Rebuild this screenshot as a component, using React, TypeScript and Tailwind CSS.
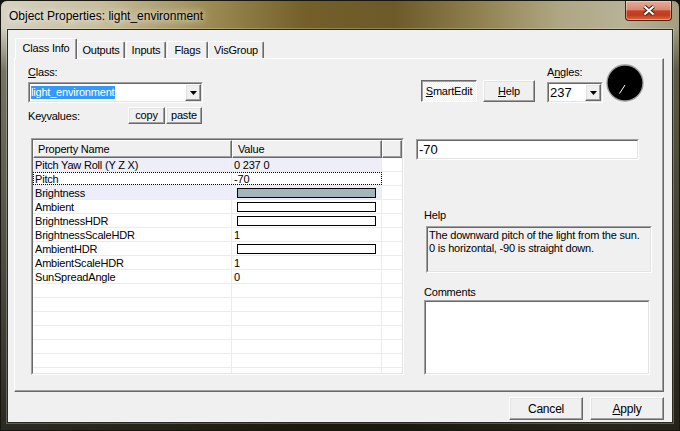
import React from "react";

const raised =
  "bg-[#f0f0f0] border border-t-white border-l-white border-r-[#696969] border-b-[#696969] shadow-[inset_-1px_-1px_0_#a0a0a0,inset_1px_1px_0_#e3e3e3]";
const sunkOuter = "border border-t-[#a0a0a0] border-l-[#a0a0a0] border-r-white border-b-white";
const sunkInner = "border border-t-[#696969] border-l-[#696969] border-r-[#e3e3e3] border-b-[#e3e3e3]";

function Arrow() {
  return (
    <svg width="7" height="4" viewBox="0 0 7 4">
      <path d="M0 0H7L3.5 4Z" fill="#000" />
    </svg>
  );
}

type Row = { name: string; value?: string; bar?: "fill" | "empty"; lav?: boolean; focus?: boolean };

const rows: Row[] = [
  { name: "Pitch Yaw Roll (Y Z X)", value: "0 237 0", lav: true },
  { name: "Pitch", value: "-70", focus: true },
  { name: "Brightness", bar: "fill", lav: true },
  { name: "Ambient", bar: "empty" },
  { name: "BrightnessHDR", bar: "empty" },
  { name: "BrightnessScaleHDR", value: "1" },
  { name: "AmbientHDR", bar: "empty" },
  { name: "AmbientScaleHDR", value: "1" },
  { name: "SunSpreadAngle", value: "0" },
  { name: "" },
  { name: "" },
  { name: "" },
  { name: "" },
  { name: "" },
  { name: "" },
  { name: "" },
];

export default function App() {
  return (
    <div className="w-[680px] h-[431px] bg-[#111]">
      <div className="relative w-[680px] h-[431px] rounded-t-[7px] border border-[#17160f] overflow-hidden flex flex-col text-black text-[11px] tracking-[-0.2px] font-['Liberation_Sans',Arial,sans-serif] bg-[linear-gradient(180deg,rgba(0,0,0,0)_0px,rgba(0,0,0,0)_26px,rgba(25,22,10,0.5)_70px,rgba(12,11,6,0.85)_100%),linear-gradient(90deg,#d6d2c2_0%,#c6bd9a_15%,#9e8d55_30%,#725f29_45%,#6c5a29_58%,#8e7f4e_70%,#aea682_82%,#b8b297_92%,#a49d80_100%)]">
        {/* Title bar */}
        <div className="h-[28px] pl-[8px] pt-[8px] text-[12px] leading-[15px] tracking-normal [text-shadow:0_0_6px_rgba(255,255,255,0.95),0_0_12px_rgba(255,255,255,0.7)]">
          Object Properties: light_environment
        </div>
        <div className="absolute top-0 right-[7px] w-[47px] h-[20px] rounded-b-[4px] border border-t-0 border-[#4a2216] bg-[linear-gradient(180deg,#e6ab98_0%,#d98a74_45%,#c4432a_52%,#c23c1e_75%,#de6c3c_100%)] shadow-[inset_0_0_0_1px_rgba(255,255,255,0.35)] flex items-center justify-center">
          <svg width="14" height="11" viewBox="0 0 14 11">
            <path d="M2.5 1.5L11.5 9.5M11.5 1.5L2.5 9.5" stroke="#3b1a10" strokeWidth="4" />
            <path d="M2.5 1.5L11.5 9.5M11.5 1.5L2.5 9.5" stroke="#fff" strokeWidth="2.2" />
          </svg>
        </div>

        {/* Client area */}
        <div className="mx-[6px] h-[394px] border border-[#2b2a20] bg-[#f0f0f0] shadow-[0_0_0_1px_rgba(255,255,255,0.25)] pt-[8px]">
          <div className="ml-[6px] w-[650px]">
            {/* Tabs */}
            <div className="flex items-end h-[20px]">
              <div className="relative z-10 self-start ml-[1px] w-[62px] h-[21px] bg-[#f0f0f0] border-t border-l border-r border-t-white border-l-white border-r-[#696969] rounded-t-[2px] shadow-[inset_-1px_0_0_#a0a0a0] flex items-center justify-center pb-[2px]">
                Class Info
              </div>
              <div className="w-[48px] h-[17px] bg-[#f0f0f0] border-t border-l border-r border-t-white border-l-white border-r-[#696969] rounded-t-[2px] shadow-[inset_-1px_0_0_#a0a0a0] flex items-center justify-center">
                Outputs
              </div>
              <div className="ml-[1px] w-[40px] h-[17px] bg-[#f0f0f0] border-t border-l border-r border-t-white border-l-white border-r-[#696969] rounded-t-[2px] shadow-[inset_-1px_0_0_#a0a0a0] flex items-center justify-center">
                Inputs
              </div>
              <div className="ml-[1px] w-[41px] h-[17px] bg-[#f0f0f0] border-t border-l border-r border-t-white border-l-white border-r-[#696969] rounded-t-[2px] shadow-[inset_-1px_0_0_#a0a0a0] flex items-center justify-center">
                Flags
              </div>
              <div className="w-[56px] h-[17px] bg-[#f0f0f0] border-t border-l border-r border-t-white border-l-white border-r-[#696969] rounded-t-[2px] shadow-[inset_-1px_0_0_#a0a0a0] flex items-center justify-center">
                VisGroup
              </div>
            </div>

            {/* Panel */}
            <div className="h-[334px] bg-[#f0f0f0] border border-t-white border-l-white border-r-[#696969] border-b-[#696969] shadow-[inset_-1px_-1px_0_#a0a0a0]">
              {/* Top row */}
              <div className="flex items-start">
                <div className="ml-[13px] w-[175px] pt-[7px]">
                  <div className="leading-[13px]">
                    <span className="underline">C</span>lass:
                  </div>
                  <div className={`mt-[3px] h-[21px] ${sunkOuter}`}>
                    <div className={`h-full ${sunkInner} bg-white flex items-center`}>
                      <span className="ml-[1px] h-[13px] leading-[13px] bg-[#3399ff] text-white pr-[1px]">
                        light_environment
                      </span>
                      <div className={`ml-auto w-[16px] h-full ${raised} flex items-center justify-center`}>
                        <Arrow />
                      </div>
                    </div>
                  </div>
                  <div className="mt-[4px] flex items-start">
                    <div className="w-[100px] pt-[3px] leading-[13px]">
                      Ke<span className="underline">y</span>values:
                    </div>
                    <div className={`w-[37px] h-[17px] ${raised} flex items-center justify-center leading-[13px]`}>copy</div>
                    <div className={`ml-[1px] w-[36px] h-[17px] ${raised} flex items-center justify-center leading-[13px]`}>paste</div>
                  </div>
                </div>

                <div className="ml-[218px] mt-[21px] w-[56px] h-[22px] border border-t-[#696969] border-l-[#696969] border-r-white border-b-white shadow-[inset_1px_1px_0_#a0a0a0] bg-[repeating-conic-gradient(#ffffff_0_25%,#f0f0f0_0_50%)] bg-[length:2px_2px] flex items-center justify-center pt-[1px]">
                  <span>
                    <span className="underline">S</span>martEdit
                  </span>
                </div>
                <div className={`ml-[6px] mt-[21px] w-[52px] h-[22px] ${raised} flex items-center justify-center`}>
                  <span>
                    <span className="underline">H</span>elp
                  </span>
                </div>

                <div className="ml-[12px] w-[56px] pt-[7px]">
                  <div className="leading-[13px]">
                    A<span className="underline">n</span>gles:
                  </div>
                  <div className={`mt-[3px] h-[21px] ${sunkOuter}`}>
                    <div className={`h-full ${sunkInner} bg-white flex items-center`}>
                      <span className="ml-[1px] text-[13px] leading-[15px] tracking-normal">237</span>
                      <div className={`ml-auto w-[16px] h-full ${raised} flex items-center justify-center`}>
                        <Arrow />
                      </div>
                    </div>
                  </div>
                </div>

                <div className="ml-[3px] mt-[5px] w-[38px] h-[38px]">
                  <svg width="38" height="38" viewBox="0 0 38 38">
                    <circle cx="19" cy="19" r="18" fill="#000" stroke="#9a9a9a" strokeWidth="1.3" />
                    <line x1="19" y1="21" x2="13.5" y2="29.5" stroke="#fff" strokeWidth="1" />
                  </svg>
                </div>
              </div>

              {/* Bottom section */}
              <div className="mt-[14px] flex items-start">
                {/* List */}
                <div className={`ml-[16px] w-[373px] h-[237px] ${sunkOuter}`}>
                  <div className={`h-full ${sunkInner} bg-white overflow-hidden`}>
                    <div className="flex h-[18px]">
                      <div className="w-[199px] h-full bg-[#f0f0f0] border border-t-white border-l-white border-r-[#696969] border-b-[#696969] shadow-[inset_-1px_-1px_0_#a0a0a0] pl-[4px] flex items-center">
                        Property Name
                      </div>
                      <div className="w-[150px] h-full bg-[#f0f0f0] border border-t-white border-l-white border-r-[#696969] border-b-[#696969] shadow-[inset_-1px_-1px_0_#a0a0a0] pl-[5px] flex items-center">
                        Value
                      </div>
                      <div className="flex-1 h-full bg-[#f0f0f0] border border-t-white border-l-white border-r-[#696969] border-b-[#696969] shadow-[inset_-1px_-1px_0_#a0a0a0]" />
                    </div>
                    {rows.map((r, i) => (
                      <div key={i} className="flex h-[14px] border-b border-b-[#ececec]">
                        <div
                          className={`flex w-[349px] h-full ${r.lav ? "bg-[#eeeef9]" : ""} ${
                            r.focus ? "outline-1 outline-dotted outline-black -outline-offset-1" : ""
                          }`}
                        >
                          <div className="w-[199px] h-full border-r border-r-[#ececec] pl-[2px] leading-[14px] whitespace-nowrap">
                            {r.name}
                          </div>
                          <div className="w-[150px] h-full border-r border-r-[#ececec] leading-[14px] flex items-center">
                            {r.bar ? (
                              <div
                                className={`ml-[5px] w-[139px] h-[10px] border border-black ${
                                  r.bar === "fill" ? "bg-[#a5b5bc]" : "bg-white"
                                }`}
                              />
                            ) : (
                              <span className="pl-[2px]">{r.value}</span>
                            )}
                          </div>
                        </div>
                        <div className="flex-1" />
                      </div>
                    ))}
                  </div>
                </div>

                {/* Right column */}
                <div className="ml-[12px] w-[236px] pt-[1px]">
                  <div className={`w-[223px] h-[21px] ${sunkOuter}`}>
                    <div className={`h-full ${sunkInner} bg-white flex items-center`}>
                      <span className="ml-[1px] text-[13px] leading-[15px] tracking-normal">-70</span>
                    </div>
                  </div>
                  <div className="ml-[8px] mt-[49px] leading-[13px]">Help</div>
                  <div className={`ml-[10px] mt-[4px] w-[226px] h-[47px] ${sunkOuter}`}>
                    <div className={`h-full ${sunkInner} bg-[#f0f0f0] pl-[1px] pt-[1px] leading-[13px]`}>
                      The downward pitch of the light from the sun.
                      <br />0 is horizontal, -90 is straight down.
                    </div>
                  </div>
                  <div className="ml-[8px] mt-[13px] leading-[13px]">Comments</div>
                  <div className={`ml-[8px] mt-[1px] w-[226px] h-[75px] ${sunkOuter}`}>
                    <div className={`h-full ${sunkInner} bg-white`} />
                  </div>
                </div>
              </div>
            </div>

            {/* Dialog buttons */}
            <div className="mt-[5px] flex justify-end gap-[7px]">
              <div className={`w-[74px] h-[23px] ${raised} flex items-center justify-center text-[12px]`}>Cancel</div>
              <div className={`w-[74px] h-[23px] ${raised} flex items-center justify-center text-[12px]`}>
                <span>
                  <span className="underline">A</span>pply
                </span>
              </div>
            </div>
          </div>
        </div>
      </div>
    </div>
  );
}
